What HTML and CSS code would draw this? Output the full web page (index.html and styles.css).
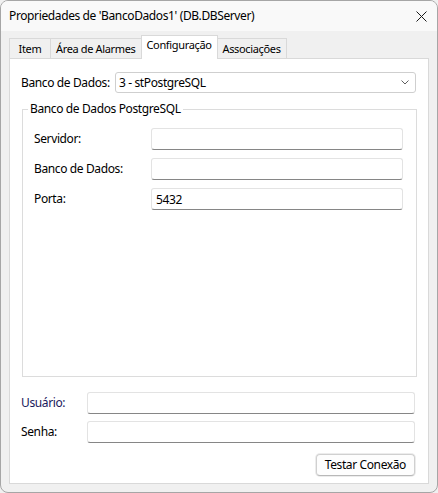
FILE: index.html
```html
<!DOCTYPE html>
<html lang="pt-BR">
<head>
    <meta charset="UTF-8">
    <meta name="viewport" content="width=device-width, initial-scale=1.0">
    <title>Propriedades de 'BancoDados1'</title>
    <link rel="stylesheet" href="styles.css">
</head>

<body>
    <div class="window">
        <div class="titlebar">
            <span class="title">Propriedades de 'BancoDados1' (DB.DBServer)</span>
            <span class="close">
                <svg width="11" height="11" viewBox="0 0 11 11"><path d="M0.5 0.5L10.5 10.5M10.5 0.5L0.5 10.5" stroke="#1a1a1a" stroke-width="1" fill="none"/></svg>
            </span>
        </div>

        <div class="tabs">
            <div class="tab">Item</div>
            <div class="tab">Área de Alarmes</div>
            <div class="tab active">Configuração</div>
            <div class="tab">Associações</div>
        </div>

        <div class="panel">
            <div class="field combo-row">
                <label>Banco de Dados:</label>
                <div class="combo">
                    <span>3 - stPostgreSQL</span>
                    <svg width="8" height="5" viewBox="0 0 8 5"><path d="M0.5 0.5L4 4L7.5 0.5" stroke="#5f5f5f" stroke-width="1" fill="none"/></svg>
                </div>
            </div>

            <fieldset class="group">
                <legend>Banco de Dados PostgreSQL</legend>
                <div class="field">
                    <label for="server">Servidor:</label>
                    <input type="text" id="server">
                </div>
                <div class="field">
                    <label for="dbname">Banco de Dados:</label>
                    <input type="text" id="dbname">
                </div>
                <div class="field">
                    <label for="port">Porta:</label>
                    <input type="text" id="port" value="5432">
                </div>
            </fieldset>

            <div class="login">
                <div class="field">
                    <label for="user" class="focus">Usuário:</label>
                    <input type="text" id="user">
                </div>
                <div class="field">
                    <label for="pass">Senha:</label>
                    <input type="password" id="pass">
                </div>
            </div>

            <div class="actions">
                <button>Testar Conexão</button>
            </div>
        </div>
    </div>
</body>
</html>
```

FILE: styles.css
```css
body {
    margin: 0;
    font-family: "Noto Sans", "Open Sans", sans-serif;
    font-size: 12px;
    line-height: 16px;
    letter-spacing: -0.38px;
    color: #000;
    background: #f0f0f0;
}
.window {
    width: 438px;
    height: 493px;
    box-sizing: border-box;
    border: 1px solid #a6a6a6;
    border-radius: 8px;
    background: #f0f0f0;
    display: flex;
    flex-direction: column;
    overflow: hidden;
}
.titlebar {
    height: 30px;
    display: flex;
    align-items: center;
    justify-content: space-between;
    padding: 0 10px 0 8px;
    background: #f9f9f9;
}
.close {
    display: flex;
    margin-top: 1px;
}
.tabs {
    display: flex;
    align-items: flex-end;
    margin-top: 5px;
    padding-left: 8px;
    height: 22px;
}
.tab {
    min-width: 42px;
    box-sizing: border-box;
    text-align: center;
    white-space: nowrap;
    font-size: 11px;
    letter-spacing: -0.35px;
    padding: 2px 5px 1px 5px;
    border: 1px solid #d9d9d9;
    border-bottom: none;
    margin-right: -1px;
    background: #f0f0f0;
}
.tab.active {
    position: relative;
    z-index: 1;
    background: #fff;
    padding-top: 1px;
    padding-bottom: 6px;
    margin-bottom: -1px;
}
.panel {
    flex: 1;
    display: flex;
    flex-direction: column;
    margin: 0 8px 8px 8px;
    padding: 13px 12px 7px 11px;
    border: 1px solid #d9d9d9;
    background: #fff;
}
.field {
    display: flex;
    align-items: center;
    height: 22px;
}
.field label {
    flex: none;
    white-space: nowrap;
}
.combo-row {
    height: 21px;
}
.combo-row label {
    width: 94px;
}
.combo {
    flex: 1;
    height: 21px;
    box-sizing: border-box;
    display: flex;
    align-items: center;
    justify-content: space-between;
    padding: 0 6px 0 3px;
    border: 1px solid #cfcfcf;
    border-radius: 3px;
}
input {
    flex: 1;
    min-width: 0;
    height: 22px;
    box-sizing: border-box;
    padding: 0 4px;
    border: 1px solid #e3e3e3;
    border-bottom-color: #868686;
    border-radius: 3px;
    font: inherit;
    letter-spacing: inherit;
    background: #fff;
    outline: none;
}
.group {
    flex: 1;
    margin: 8px -1px 0 1px;
    padding: 11px 13px 0 5px;
    border: 1px solid #dcdcdc;
    display: flex;
    flex-direction: column;
    gap: 8px;
}
.group legend {
    padding: 0 2px;
}
.group .field {
    margin-left: 6px;
}
.group .field label {
    width: 117px;
}
.login {
    display: flex;
    flex-direction: column;
    gap: 7px;
    margin-top: 15px;
    padding-right: 1px;
}
.login .field label {
    width: 66px;
}
.login .focus {
    color: #1a1a5c;
}
.actions {
    display: flex;
    justify-content: flex-end;
    margin-top: 11px;
    padding-right: 1px;
}
button {
    height: 22px;
    padding: 0 8px;
    border: 1px solid #d0d0d0;
    border-bottom-color: #b8b8b8;
    border-radius: 4px;
    background: #fdfdfd;
    box-shadow: 0 0 0 1px #ececec;
    font: inherit;
    letter-spacing: inherit;
    color: #000;
}
```
